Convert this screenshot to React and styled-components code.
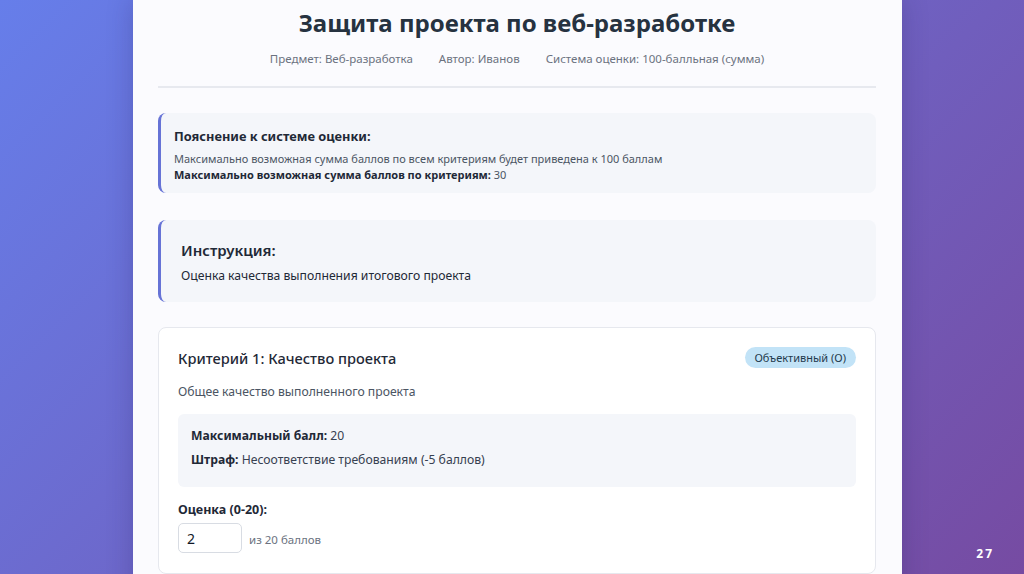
import React from 'react';
import styled, { createGlobalStyle } from 'styled-components';

const GlobalStyle = createGlobalStyle`
  html, body {
    margin: 0;
    padding: 0;
    height: 100%;
    overflow: hidden;
  }
  body {
    font-family: "Noto Sans", "Open Sans", sans-serif;
    background: linear-gradient(135deg, #667eea 0%, #764ba2 100%);
    color: #1f2937;
  }
`;

const Stage = styled.div`
  position: relative;
  height: 574px;
  padding: 0 122px 0 133px;
  overflow: hidden;
`;

const Sheet = styled.div`
  background: #fbfbfe;
  box-shadow: 0 0 24px rgba(40, 30, 90, 0.25);
  padding: 6px 26px 0 25px;
  min-height: 640px;
`;

const Header = styled.div`
  text-align: center;
  border-bottom: 2px solid #e7e9ef;
  padding-bottom: 20px;
  margin-bottom: 25px;
`;

const Title = styled.h1`
  margin: 0;
  font-size: 24px;
  font-weight: 700;
  color: #263240;
  line-height: 34px;
`;

const Meta = styled.div`
  display: flex;
  justify-content: center;
  gap: 26px;
  margin-top: 11px;
  font-size: 11.5px;
  color: #6b7280;
`;

const Note = styled.div`
  background: #f4f6fa;
  border-left: 3px solid #6673d6;
  border-radius: 8px;
  padding: ${p => p.$pad};
  margin-bottom: ${p => p.$mb}px;
`;

const NoteTitle = styled.div`
  font-size: ${p => p.$size}px;
  font-weight: ${p => p.$weight};
  color: #1f2937;
  margin-bottom: ${p => p.$mb}px;
`;

const NoteLine = styled.div`
  font-size: ${p => p.$size}px;
  color: ${p => p.$color};
  line-height: ${p => p.$lh}px;
  b {
    color: #1f2937;
    font-weight: 700;
  }
`;

const Criterion = styled.div`
  background: #fff;
  border: 1px solid #e6e8ee;
  border-radius: 8px;
  padding: 19px 19px 20px 19px;
`;

const CritHead = styled.div`
  display: flex;
  align-items: center;
  justify-content: space-between;
  margin-bottom: 15px;
`;

const CritTitle = styled.h3`
  margin: 0;
  font-size: 14.6px;
  font-weight: 500;
  color: #1f2937;
`;

const Badge = styled.span`
  background: #c2e3f7;
  color: #1e3a4c;
  font-size: 11px;
  padding: 3px 10px;
  border-radius: 999px;
`;

const Desc = styled.div`
  font-size: 12.2px;
  color: #4b5563;
  margin-bottom: 14px;
`;

const InfoBox = styled.div`
  background: #f4f6fa;
  border-radius: 6px;
  padding: 13px 13px 18px;
  display: flex;
  flex-direction: column;
  gap: 6px;
`;

const InfoLine = styled.div`
  font-size: 12.2px;
  color: #374151;
  line-height: 18px;
  b {
    color: #1f2937;
    font-weight: 700;
  }
`;

const Label = styled.div`
  margin-top: 14px;
  font-size: 12.5px;
  font-weight: 700;
  color: #1f2937;
`;

const InputRow = styled.div`
  display: flex;
  align-items: center;
  gap: 7px;
  margin-top: 5px;
`;

const ScoreInput = styled.input`
  width: 64px;
  height: 30px;
  box-sizing: border-box;
  border: 1px solid #d8dce3;
  border-radius: 5px;
  padding: 0 8px;
  font-family: inherit;
  font-size: 14px;
  color: #111827;
  background: #fff;
`;

const Hint = styled.span`
  font-size: 11.5px;
  color: #6b7280;
  margin-top: 2px;
`;

const PageNum = styled.div`
  position: absolute;
  right: 30px;
  bottom: 12px;
  color: #fff;
  font-size: 12px;
  font-weight: 700;
  letter-spacing: 2px;
`;

export default function App() {
  return (
    <>
      <GlobalStyle />
      <Stage>
        <Sheet>
          <Header>
            <Title>Защита проекта по веб-разработке</Title>
            <Meta>
              <span>Предмет: Веб-разработка</span>
              <span>Автор: Иванов</span>
              <span>Система оценки: 100-балльная (сумма)</span>
            </Meta>
          </Header>

          <Note $pad="14px 16px 10px 13px" $mb={27}>
            <NoteTitle $size={12.8} $weight={700} $mb={6}>Пояснение к системе оценки:</NoteTitle>
            <NoteLine $size={11} $color="#4b5563" $lh={16}>
              Максимально возможная сумма баллов по всем критериям будет приведена к 100 баллам
            </NoteLine>
            <NoteLine $size={11} $color="#4b5563" $lh={16}>
              <b>Максимально возможная сумма баллов по критериям:</b> 30
            </NoteLine>
          </Note>

          <Note $pad="20px 16px 17px 20px" $mb={25}>
            <NoteTitle $size={15} $weight={600} $mb={7}>Инструкция:</NoteTitle>
            <NoteLine $size={12.2} $color="#1f2937" $lh={18}>
              Оценка качества выполнения итогового проекта
            </NoteLine>
          </Note>

          <Criterion>
            <CritHead>
              <CritTitle>Критерий 1: Качество проекта</CritTitle>
              <Badge>Объективный (О)</Badge>
            </CritHead>
            <Desc>Общее качество выполненного проекта</Desc>
            <InfoBox>
              <InfoLine><b>Максимальный балл:</b> 20</InfoLine>
              <InfoLine><b>Штраф:</b> Несоответствие требованиям (-5 баллов)</InfoLine>
            </InfoBox>
            <Label>Оценка (0-20):</Label>
            <InputRow>
              <ScoreInput type="number" defaultValue={2} />
              <Hint>из 20 баллов</Hint>
            </InputRow>
          </Criterion>
        </Sheet>
        <PageNum>27</PageNum>
      </Stage>
    </>
  );
}
